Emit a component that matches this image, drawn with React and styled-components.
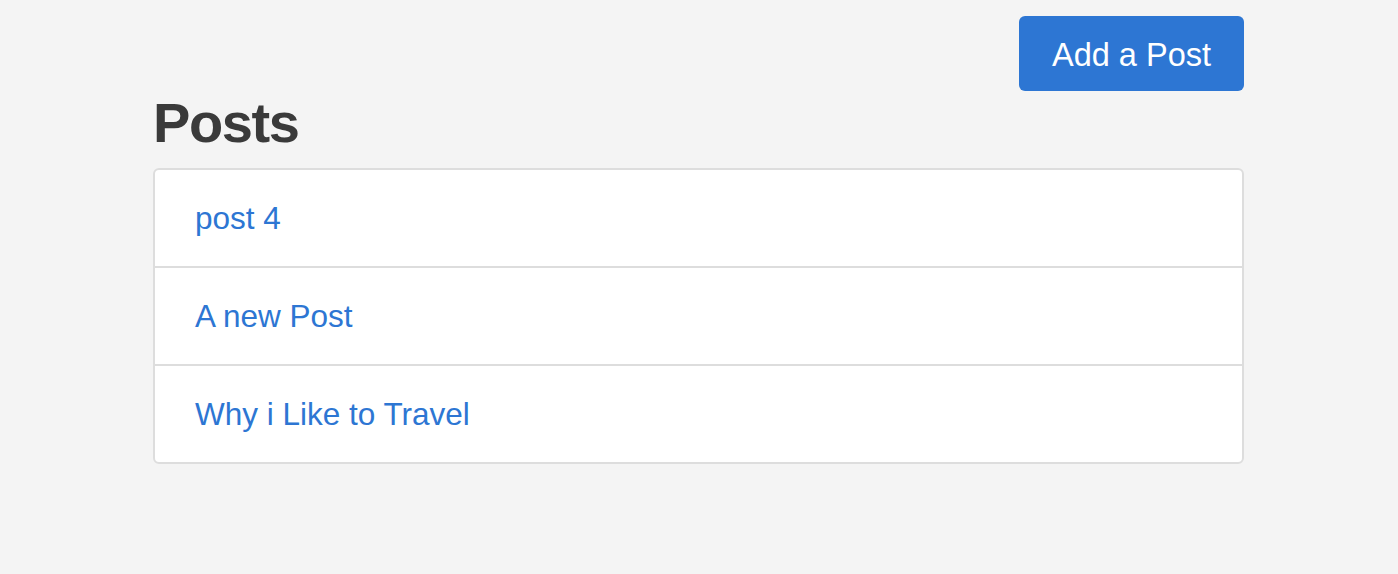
import React from 'react';
import styled, { createGlobalStyle } from 'styled-components';

const GlobalStyle = createGlobalStyle`
  html, body {
    margin: 0;
    padding: 0;
    background-color: #f4f4f4;
    font-family: 'Liberation Sans', Arial, Helvetica, sans-serif;
  }
`;

const Page = styled.div`
  width: 1091px;
  margin: 0 0 0 153px;
  padding-top: 16px;
`;

const Toolbar = styled.div`
  display: flex;
  justify-content: flex-end;
`;

const AddButton = styled.button`
  width: 225px;
  height: 75px;
  padding: 3px 0 0;
  background-color: #2d76d3;
  color: #fff;
  border: none;
  border-radius: 6px;
  font-family: inherit;
  font-size: 32.5px;
  line-height: 72px;
  cursor: pointer;
`;

const Title = styled.h1`
  margin: 1px 0 14px;
  font-size: 56px;
  letter-spacing: -1.4px;
  line-height: 1.1;
  font-weight: bold;
  color: #3a3a3a;
`;

const PostList = styled.ul`
  list-style: none;
  margin: 0;
  padding: 0;
  background: #fff;
  border: 2px solid #dddddd;
  border-radius: 6px;
`;

const PostItem = styled.li`
  padding: 26px 40px;
  height: 44px;
  border-top: ${(p) => (p.first ? 'none' : '2px solid #dddddd')};
`;

const PostLink = styled.a`
  font-size: 31.5px;
  line-height: 44px;
  color: #2d76d3;
  text-decoration: none;
`;

const posts = [
  { id: 4, title: 'post 4' },
  { id: 3, title: 'A new Post' },
  { id: 2, title: 'Why i Like to Travel' },
];

const App = () => {
  return (
    <>
      <GlobalStyle />
      <Page>
        <Toolbar>
          <AddButton>Add a Post</AddButton>
        </Toolbar>
        <Title>Posts</Title>
        <PostList>
          {posts.map((post, i) => (
            <PostItem key={post.id} first={i === 0}>
              <PostLink href="#">{post.title}</PostLink>
            </PostItem>
          ))}
        </PostList>
      </Page>
    </>
  );
};

export default App;
